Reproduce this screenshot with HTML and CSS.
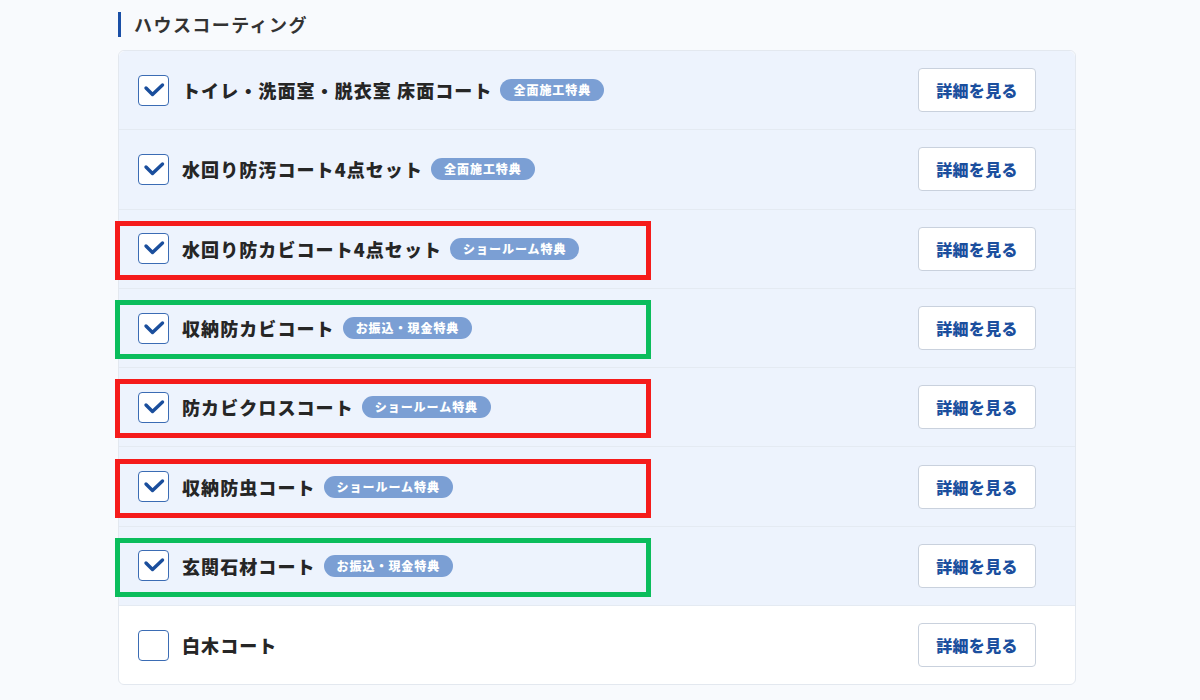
FILE: index.html
```html
<!DOCTYPE html>
<html lang="ja">
<head>
    <meta charset="UTF-8">
    <meta name="viewport" content="width=device-width, initial-scale=1.0">
    <title>ハウスコーティング</title>
    <link rel="stylesheet" href="styles.css">
</head>
<body>

    <section class="coating">
        <h2 class="section-title">ハウスコーティング</h2>

        <ul class="option-list">
            <li class="option is-checked">
                <span class="check"><svg viewBox="0 0 29 29"><path d="M7 12l6.5 6.5L23.5 9"/></svg></span>
                <span class="option-name">トイレ・洗面室・脱衣室 床面コート</span>
                <span class="badge">全面施工特典</span>
                <button type="button" class="detail-btn">詳細を見る</button>
            </li>
            <li class="option is-checked">
                <span class="check"><svg viewBox="0 0 29 29"><path d="M7 12l6.5 6.5L23.5 9"/></svg></span>
                <span class="option-name">水回り防汚コート4点セット</span>
                <span class="badge">全面施工特典</span>
                <button type="button" class="detail-btn">詳細を見る</button>
            </li>
            <li class="option is-checked">
                <span class="mark mark-red"></span>
                <span class="check"><svg viewBox="0 0 29 29"><path d="M7 12l6.5 6.5L23.5 9"/></svg></span>
                <span class="option-name">水回り防カビコート4点セット</span>
                <span class="badge">ショールーム特典</span>
                <button type="button" class="detail-btn">詳細を見る</button>
            </li>
            <li class="option is-checked">
                <span class="mark mark-green"></span>
                <span class="check"><svg viewBox="0 0 29 29"><path d="M7 12l6.5 6.5L23.5 9"/></svg></span>
                <span class="option-name">収納防カビコート</span>
                <span class="badge">お振込・現金特典</span>
                <button type="button" class="detail-btn">詳細を見る</button>
            </li>
            <li class="option is-checked">
                <span class="mark mark-red"></span>
                <span class="check"><svg viewBox="0 0 29 29"><path d="M7 12l6.5 6.5L23.5 9"/></svg></span>
                <span class="option-name">防カビクロスコート</span>
                <span class="badge">ショールーム特典</span>
                <button type="button" class="detail-btn">詳細を見る</button>
            </li>
            <li class="option is-checked">
                <span class="mark mark-red"></span>
                <span class="check"><svg viewBox="0 0 29 29"><path d="M7 12l6.5 6.5L23.5 9"/></svg></span>
                <span class="option-name">収納防虫コート</span>
                <span class="badge">ショールーム特典</span>
                <button type="button" class="detail-btn">詳細を見る</button>
            </li>
            <li class="option is-checked">
                <span class="mark mark-green"></span>
                <span class="check"><svg viewBox="0 0 29 29"><path d="M7 12l6.5 6.5L23.5 9"/></svg></span>
                <span class="option-name">玄関石材コート</span>
                <span class="badge">お振込・現金特典</span>
                <button type="button" class="detail-btn">詳細を見る</button>
            </li>
            <li class="option">
                <span class="check"></span>
                <span class="option-name">白木コート</span>
                <button type="button" class="detail-btn">詳細を見る</button>
            </li>
        </ul>
    </section>

</body>
</html>
```

FILE: styles.css
```css
body {
    font-family: "Noto Sans CJK JP", "Noto Sans", sans-serif;
    background-color: #f8fafd;
    color: #262626;
    margin: 0;
    padding: 0;
}

.coating {
    width: 958px;
    margin-left: 118px;
    padding-top: 12px;
}

.section-title {
    margin: 0 0 13px;
    padding-left: 13px;
    border-left: 3px solid #1a4fa6;
    font-size: 18px;
    line-height: 25px;
    font-weight: 700;
    color: #333;
    letter-spacing: 0.08em;
}

.option-list {
    list-style: none;
    margin: 0;
    padding: 0;
    background-color: #fff;
    border: 1px solid #e3e8ef;
    border-radius: 6px;
}

.option {
    position: relative;
    display: flex;
    align-items: center;
    height: 78.3px;
    padding: 0 39px 0 19px;
    border-bottom: 1px solid #e4eaf2;
}

.option:first-child {
    border-radius: 6px 6px 0 0;
}

.option:last-child {
    border-bottom: none;
    border-radius: 0 0 6px 6px;
}

.option.is-checked {
    background-color: #edf3fd;
}

.check {
    flex: none;
    width: 31px;
    height: 31px;
    box-sizing: border-box;
    border: 1px solid #3b6cb4;
    border-radius: 4px;
    background-color: #fff;
    margin-right: 13px;
}

.check svg {
    display: block;
    width: 29px;
    height: 29px;
    fill: none;
    stroke: #1a4e9c;
    stroke-width: 3.4;
    stroke-linecap: round;
    stroke-linejoin: round;
}

.option-name {
    font-size: 18px;
    font-weight: 900;
    letter-spacing: 0.06em;
    color: #262626;
}

.badge {
    margin-left: 8px;
    padding: 0 13px;
    height: 22px;
    line-height: 22px;
    border-radius: 11px;
    background-color: #7b9fd4;
    color: #fff;
    font-size: 12px;
    font-weight: 900;
    letter-spacing: 0.08em;
}

.detail-btn {
    margin-left: auto;
    width: 118px;
    height: 44px;
    background-color: #fff;
    border: 1px solid #c9d1dd;
    border-radius: 4px;
    color: #1b4f9e;
    font-family: inherit;
    font-size: 16px;
    font-weight: 900;
    letter-spacing: 0.02em;
    cursor: pointer;
}

.detail-btn:hover {
    background-color: #f3f7fd;
}

/* highlight frames drawn over the rows */
.mark {
    position: absolute;
    left: -4px;
    top: 50%;
    width: 536px;
    height: 59px;
    margin-top: -28px;
    box-sizing: border-box;
    border: 5px solid;
    pointer-events: none;
}

.mark-red {
    border-color: #f51b1b;
}

.mark-green {
    border-color: #0bbd5c;
}
```
